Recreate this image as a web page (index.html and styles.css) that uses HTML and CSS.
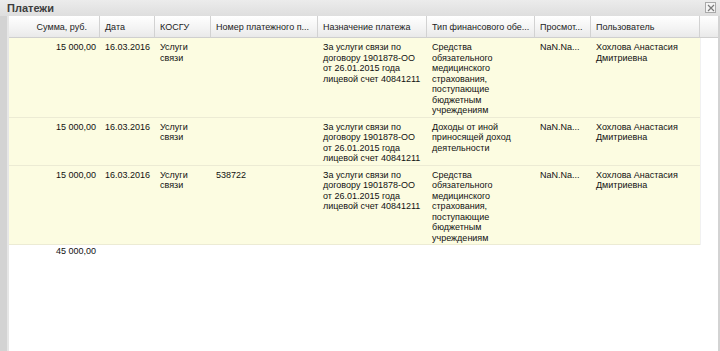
FILE: index.html
```html
<!DOCTYPE html>
<html lang="ru">
<head>
<meta charset="utf-8">
<title>Платежи</title>
<link rel="stylesheet" href="styles.css">
</head>
<body>
<div class="window">
  <div class="titlebar">
    <span class="title">Платежи</span>
    <span class="close"><svg width="8" height="8" viewBox="0 0 8 8"><path d="M1 1L7 7M7 1L1 7" stroke="#7a7a7a" stroke-width="1.2" fill="none"/></svg></span>
  </div>
  <div class="body">
    <table class="grid">
      <colgroup>
        <col class="c-sum"><col class="c-date"><col class="c-kosgu"><col class="c-num"><col class="c-purpose"><col class="c-type"><col class="c-view"><col class="c-user"><col class="c-fill">
      </colgroup>
      <thead>
        <tr>
          <th class="num">Сумма, руб.</th>
          <th>Дата</th>
          <th>КОСГУ</th>
          <th>Номер платежного п...</th>
          <th>Назначение платежа</th>
          <th>Тип финансового обе...</th>
          <th>Просмот...</th>
          <th>Пользователь</th>
          <th class="fill"></th>
        </tr>
      </thead>
      <tbody>
        <tr class="row">
          <td class="num">15 000,00</td>
          <td>16.03.2016</td>
          <td>Услуги<br>связи</td>
          <td></td>
          <td>За услуги связи по<br>договору 1901878-ОО<br>от 26.01.2015 года<br>лицевой счет 40841211</td>
          <td>Средства<br>обязательного<br>медицинского<br>страхования,<br>поступающие<br>бюджетным<br>учреждениям</td>
          <td>NaN.Na...</td>
          <td>Хохлова Анастасия<br>Дмитриевна</td>
          <td class="fill"></td>
        </tr>
        <tr class="row">
          <td class="num">15 000,00</td>
          <td>16.03.2016</td>
          <td>Услуги<br>связи</td>
          <td></td>
          <td>За услуги связи по<br>договору 1901878-ОО<br>от 26.01.2015 года<br>лицевой счет 40841211</td>
          <td>Доходы от иной<br>приносящей доход<br>деятельности</td>
          <td>NaN.Na...</td>
          <td>Хохлова Анастасия<br>Дмитриевна</td>
          <td class="fill"></td>
        </tr>
        <tr class="row">
          <td class="num">15 000,00</td>
          <td>16.03.2016</td>
          <td>Услуги<br>связи</td>
          <td>538722</td>
          <td>За услуги связи по<br>договору 1901878-ОО<br>от 26.01.2015 года<br>лицевой счет 40841211</td>
          <td>Средства<br>обязательного<br>медицинского<br>страхования,<br>поступающие<br>бюджетным<br>учреждениям</td>
          <td>NaN.Na...</td>
          <td>Хохлова Анастасия<br>Дмитриевна</td>
          <td class="fill"></td>
        </tr>
        <tr class="total">
          <td class="num">45 000,00</td>
          <td colspan="8"></td>
        </tr>
      </tbody>
    </table>
  </div>
</div>
</body>
</html>
```
FILE: styles.css
```css
html, body {
  margin: 0;
  padding: 0;
  background: #ffffff;
}
.window {
  width: 720px;
  height: 351px;
  overflow: hidden;
  background: #d3d3d3;
  display: flex;
  flex-direction: column;
  font-family: "Liberation Sans", Arial, sans-serif;
}
.titlebar {
  height: 16px;
  flex: 0 0 16px;
  display: flex;
  align-items: center;
  justify-content: space-between;
  padding: 0 4px 0 7px;
  background: linear-gradient(#ececec, #dedede);
}
.title {
  font-weight: bold;
  font-size: 11px;
  color: #3d3d3d;
  line-height: 14px;
}
.close {
  width: 9px;
  height: 9px;
  border: 1px solid #a9a9a9;
  background: #f4f4f4;
  display: flex;
  align-items: center;
  justify-content: center;
  margin-top: -1px;
}
.body {
  flex: 1;
  margin: 0 2px 0 7px;
  border-left: 2px solid #e6e6e6;
  background: #ffffff;
}
.grid {
  table-layout: fixed;
  border-collapse: separate;
  border-spacing: 0;
  width: 709px;
  font-size: 9px;
  color: #111;
}
.c-sum { width: 91px; }
.c-date { width: 55px; }
.c-kosgu { width: 56px; }
.c-num { width: 107px; }
.c-purpose { width: 109px; }
.c-type { width: 108px; }
.c-view { width: 56px; }
.c-user { width: 109px; }
.c-fill { width: 18px; }

.grid th {
  height: 21px;
  padding: 0 0 0 5px;
  text-align: left;
  font-weight: normal;
  color: #222;
  white-space: nowrap;
  overflow: hidden;
  background: linear-gradient(#ffffff, #f3f3f3 60%, #e9e9e9);
  border-right: 1px solid #d2d2d2;
  border-bottom: 1px solid #cfcfcf;
}
.grid th.num {
  text-align: right;
  padding: 0 12px 0 0;
}
.grid th.fill {
  border-right: none;
}
.row td {
  vertical-align: top;
  padding: 4px 3px 1px 5px;
  line-height: 10.5px;
  background: #fcfce1;
  border-bottom: 1px solid #ecebd4;
  white-space: nowrap;
  overflow: hidden;
}
.row td.num {
  text-align: right;
  padding: 4px 4px 1px 0;
}
.row td.fill {
  background: #ffffff;
  border-bottom: none;
  border-left: 1px solid #f1f1f1;
}
.total td {
  padding: 1px 3px 0 5px;
  line-height: 10.5px;
}
.total td.num {
  text-align: right;
  padding: 1px 4px 0 0;
}
```
